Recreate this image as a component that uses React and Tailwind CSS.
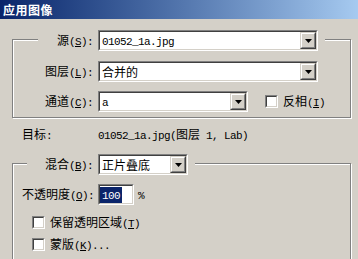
import React from "react";

// latin runs are drawn narrower, like the bitmap font of the dialog
const L = ({ children }) => (
  <span className="font-['Liberation_Mono'] text-[11px] tracking-[-0.6px]">{children}</span>
);

const Key = ({ k }) => (
  <L>
    (<span className="underline">{k}</span>)
  </L>
);

const Sunken = ({ className = "", children }) => (
  <div className={`border border-t-[#808080] border-l-[#808080] border-b-white border-r-white ${className}`}>
    <div className="w-full h-full border border-t-[#404040] border-l-[#404040] border-b-[#d4d0c8] border-r-[#d4d0c8] bg-white flex items-center">
      {children}
    </div>
  </div>
);

const Combo = ({ width, children }) => (
  <Sunken className={`${width} h-[21px] shrink-0`}>
    <div className="flex-1 pl-[2px] leading-[15px] whitespace-nowrap overflow-hidden">{children}</div>
    <div className="w-[16px] h-full border border-t-[#d4d0c8] border-l-[#d4d0c8] border-b-[#404040] border-r-[#404040]">
      <div className="w-full h-full border border-t-white border-l-white border-b-[#808080] border-r-[#808080] bg-[#d4d0c8] flex items-center justify-center">
        <svg width="7" height="4" viewBox="0 0 7 4">
          <path d="M0 0h7L3.5 4z" fill="#000" />
        </svg>
      </div>
    </div>
  </Sunken>
);

const Check = () => (
  <Sunken className="w-[13px] h-[13px] shrink-0" />
);

const Group = ({ height, children }) => (
  <div
    className={`ml-[12px] w-[339px] ${height} border border-[#808080] shadow-[1px_1px_0_#fff,inset_1px_1px_0_#fff]`}
  >
    {children}
  </div>
);

export default function App() {
  return (
    <div className="w-[358px] h-[259px] overflow-hidden bg-[#d4d0c8] text-black text-[12px] leading-[14px] font-['Noto_Sans_CJK_SC',sans-serif]">
      <div className="h-[19px] bg-linear-to-r from-[#0a246a] to-[#a6caf0] flex items-center pl-[3px]">
        <span className="text-white font-bold text-[12px] tracking-[0.5px]">应用图像</span>
      </div>

      <div className="mt-[20px]">
        <Group height="h-[79px]">
          <div className="-mt-[10px] ml-[25px] w-[287px] h-[21px] bg-[#d4d0c8] flex items-center">
            <div className="w-[55px] text-right">
              源<Key k="S" />
              <L>:</L>
            </div>
            <div className="ml-[5px]">
              <Combo width="w-[220px]">
                <L>01052_1a.jpg</L>
              </Combo>
            </div>
          </div>

          <div className="mt-[10px] ml-[25px] h-[21px] flex items-center">
            <div className="w-[55px] text-right">
              图层<Key k="L" />
              <L>:</L>
            </div>
            <div className="ml-[5px]">
              <Combo width="w-[220px]">合并的</Combo>
            </div>
          </div>

          <div className="mt-[9px] ml-[25px] h-[21px] flex items-center">
            <div className="w-[55px] text-right">
              通道<Key k="C" />
              <L>:</L>
            </div>
            <div className="ml-[5px]">
              <Combo width="w-[150px]">
                <L>a</L>
              </Combo>
            </div>
            <div className="ml-[17px]">
              <Check />
            </div>
            <div className="ml-[5px]">
              反相<Key k="I" />
            </div>
          </div>
        </Group>

        <div className="mt-[10px] ml-[22px] h-[14px] flex items-center">
          <div className="w-[76px]">
            目标<L>:</L>
          </div>
          <div className="whitespace-nowrap">
            <L>01052_1a.jpg(</L>图层<L> 1, Lab)</L>
          </div>
        </div>

        <div className="mt-[21px]">
          <Group height="h-[120px]">
            <div className="-mt-[10px] ml-[14px] w-[168px] h-[21px] bg-[#d4d0c8] flex items-center">
              <div className="w-[66px] text-right">
                混合<Key k="B" />
                <L>:</L>
              </div>
              <div className="ml-[5px]">
                <Combo width="w-[90px]">正片叠底</Combo>
              </div>
            </div>

            <div className="mt-[9px] ml-[9px] h-[21px] flex items-center">
              <div className="w-[76px] whitespace-nowrap">
                不透明度<Key k="O" />
                <L>:</L>
              </div>
              <Sunken className="w-[36px] h-[21px]">
                <span className="bg-[#0a246a] text-white px-[2px] leading-[14px]">
                  <L>100</L>
                </span>
              </Sunken>
              <div className="ml-[4px]">
                <L>%</L>
              </div>
            </div>

            <div className="mt-[11px] ml-[19px] h-[13px] flex items-center">
              <Check />
              <div className="ml-[5px]">
                保留透明区域<Key k="T" />
              </div>
            </div>

            <div className="mt-[9px] ml-[19px] h-[13px] flex items-center">
              <Check />
              <div className="ml-[5px]">
                蒙版<Key k="K" />
                <L>...</L>
              </div>
            </div>
          </Group>
        </div>
      </div>
    </div>
  );
}
